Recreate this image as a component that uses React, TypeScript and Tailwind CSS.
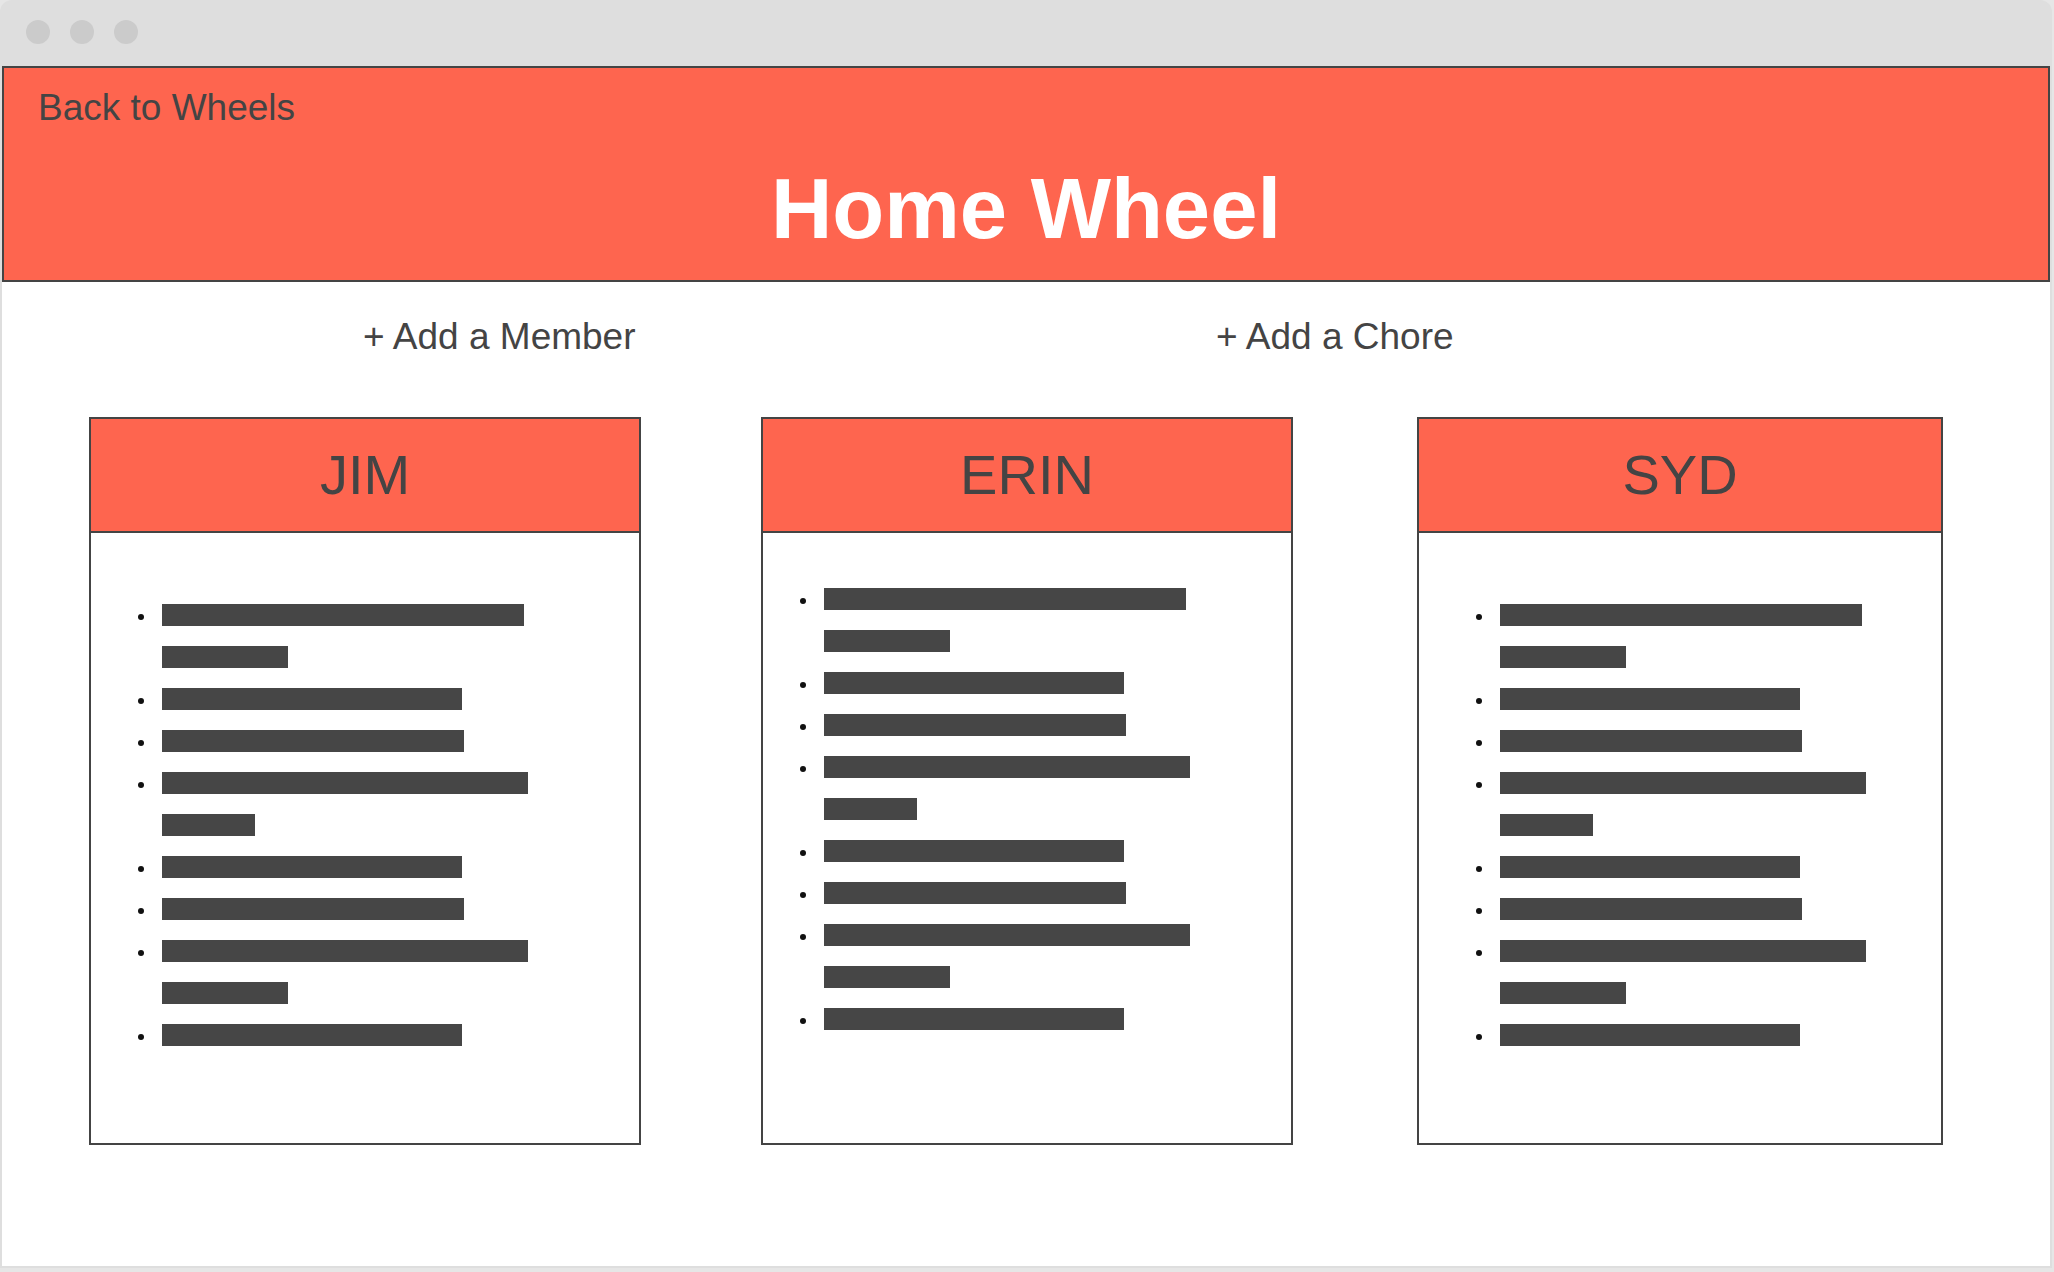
import React from "react";

type Member = {
  name: string;
  width: string;
  gap: string;
  listPad: string;
};

// each chore is drawn as one or more placeholder bars (wrapped lines)
const chores: number[][] = [
  [362, 126],
  [300],
  [302],
  [366, 93],
  [300],
  [302],
  [366, 126],
  [300],
];

const members: Member[] = [
  { name: "JIM", width: "w-[552px]", gap: "ml-0", listPad: "pt-[61px] pl-[47px]" },
  { name: "ERIN", width: "w-[532px]", gap: "ml-[120px]", listPad: "pt-[45px] pl-[37px]" },
  { name: "SYD", width: "w-[526px]", gap: "ml-[124px]", listPad: "pt-[61px] pl-[57px]" },
];

function ChoreList({ pad }: { pad: string }) {
  return (
    <ul className={`flex flex-col ${pad}`}>
      {chores.map((lines, i) => (
        <li key={i} className="flex flex-col">
          {lines.map((w, j) => (
            <div key={j} className="flex h-[42px] items-center">
              {j === 0 ? (
                <span className="mt-[4px] h-[6px] w-[6px] rounded-full bg-[#111]" />
              ) : (
                <span className="w-[6px]" />
              )}
              <span
                className="ml-[18px] h-[22px] bg-[#464646]"
                style={{ width: w }}
              />
            </div>
          ))}
        </li>
      ))}
    </ul>
  );
}

function MemberCard({ member }: { member: Member }) {
  return (
    <div
      className={`flex h-[728px] flex-col border-2 border-[#444] bg-white ${member.width} ${member.gap}`}
    >
      <div className="flex h-[114px] items-center justify-center border-b-2 border-[#444] bg-[#fe654f]">
        <span className="text-[56px] leading-none text-[#444]">{member.name}</span>
      </div>
      <div className="flex-1">
        <ChoreList pad={member.listPad} />
      </div>
    </div>
  );
}

export default function App() {
  return (
    <div
      className="h-[1272px] w-full bg-[#e6e6e6]"
      style={{ fontFamily: '"Liberation Sans", Arial, sans-serif' }}
    >
      <div className="flex h-[1268px] w-[2052px] flex-col rounded-t-[12px] bg-[#dedede]">
        {/* Window bar */}
        <div className="flex h-[66px] items-center gap-[20px] pb-[2px] pl-[26px]">
          <span className="h-[24px] w-[24px] rounded-full bg-[#cbcbcb]" />
          <span className="h-[24px] w-[24px] rounded-full bg-[#cbcbcb]" />
          <span className="h-[24px] w-[24px] rounded-full bg-[#cbcbcb]" />
        </div>

        {/* Page */}
        <div className="mx-[2px] mb-[2px] flex-1 bg-white">
          <header className="flex h-[216px] flex-col border-2 border-[#444] bg-[#fe654f] pl-[34px] pt-[21px]">
            <a className="text-[37px] leading-none text-[#444]">Back to Wheels</a>
            <h1 className="-ml-[34px] mt-[40px] text-center text-[85px] font-bold leading-none text-white">
              Home Wheel
            </h1>
          </header>

          <div className="mt-[36px] flex text-[37px] leading-none text-[#444]">
            <span className="w-[1214px] pl-[361px]">+ Add a Member</span>
            <span>+ Add a Chore</span>
          </div>

          <div className="mt-[62px] flex pl-[87px]">
            {members.map((m) => (
              <MemberCard key={m.name} member={m} />
            ))}
          </div>
        </div>
      </div>
    </div>
  );
}
